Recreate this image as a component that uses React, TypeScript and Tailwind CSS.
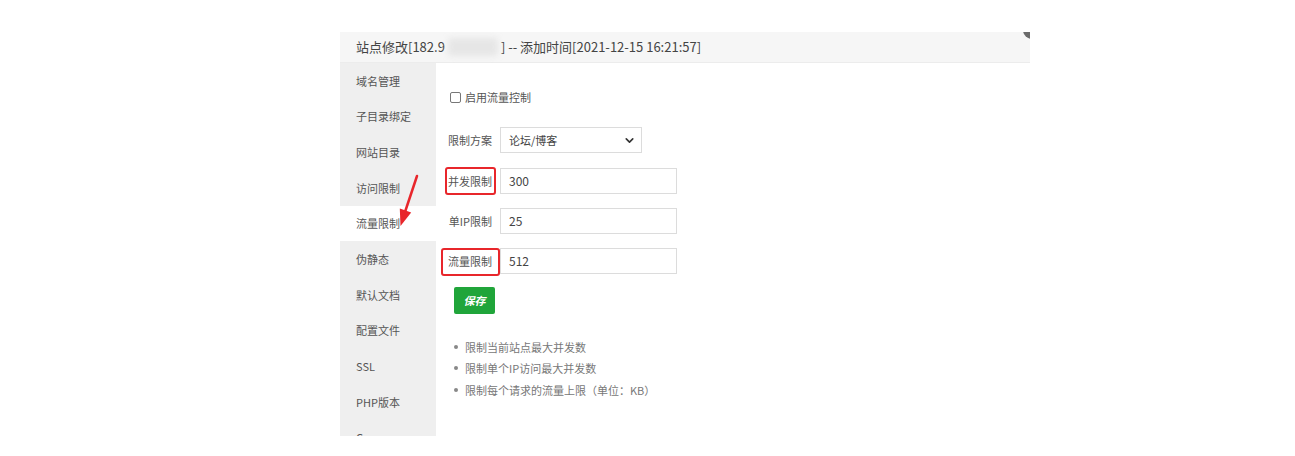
import { ChevronDown } from 'lucide-react';

const menu = ['域名管理', '子目录绑定', '网站目录', '访问限制', '流量限制', '伪静态', '默认文档', '配置文件', 'SSL', 'PHP版本', 'Composer'];

const tips = ['限制当前站点最大并发数', '限制单个IP访问最大并发数', '限制每个请求的流量上限（单位：KB）'];

function Field({ label, value, mark }: { label: string; value: string; mark?: 'tight' | 'wide' }) {
  return (
    <div className="flex items-center h-[26px]">
      <span className="relative w-[56px] text-right text-[11px] text-[#555]">
        {label}
        {mark === 'tight' && (
          <span className="absolute left-[9px] -right-[4px] -top-[6px] -bottom-[6px] border-2 border-[#e8262b] rounded-[3px]" />
        )}
        {mark === 'wide' && (
          <span className="absolute left-[5px] -right-[8px] -top-[5px] -bottom-[7px] border-2 border-[#e8262b] rounded-[3px]" />
        )}
      </span>
      <div className="ml-[8px] w-[177px] h-[26px] border border-[#dcdcdc] bg-white flex items-center px-[8px] text-[12px] text-[#444]">
        {value}
      </div>
    </div>
  );
}

export default function App() {
  return (
    <div className="w-[1295px] h-[456px] bg-white pt-[32px] pl-[340px]" style={{ fontFamily: '"Noto Sans CJK SC", "Noto Sans", sans-serif' }}>
      <div className="relative w-[690px] h-[404px] overflow-hidden flex flex-col">
        {/* Title bar */}
        <div className="h-[31px] shrink-0 bg-[#f6f6f6] border-b border-[#ececec] flex items-center pl-[16px] text-[13px] text-[#444]">
          <span>站点修改[182.9</span>
          <span className="inline-block w-[50px] h-[18px] mx-[3px] bg-[#e6e6e6] rounded blur-[3px]" />
          <span>] -- 添加时间[2021-12-15 16:21:57]</span>
        </div>
        <span className="absolute -top-[11px] -right-[11px] w-[18px] h-[18px] rounded-full bg-[#6b6b6b]" />

        <div className="flex flex-1 min-h-0">
          {/* Side menu */}
          <div className="w-[96px] shrink-0 bg-[#efefef] overflow-hidden">
            {menu.map((m) => (
              <div
                key={m}
                className={`h-[35.7px] flex items-center pl-[16px] text-[11px] text-[#555] ${m === '流量限制' ? 'bg-white' : ''}`}
              >
                {m}
              </div>
            ))}
          </div>

          {/* Content */}
          <div className="flex-1 bg-white pt-[21px]">
            <label className="flex items-center h-[26px] pl-[14px] text-[11px] text-[#555]">
              <span className="w-[11px] h-[11px] border border-[#777] rounded-[2px] bg-white" />
              <span className="ml-[4px]">启用流量控制</span>
            </label>

            <div className="mt-[17px] flex items-center h-[26px]">
              <span className="w-[56px] text-right text-[11px] text-[#555]">限制方案</span>
              <div className="ml-[8px] w-[142px] h-[26px] border border-[#dcdcdc] bg-white flex items-center justify-between pl-[8px] pr-[5px] text-[11px] text-[#444]">
                <span>论坛/博客</span>
                <ChevronDown className="w-[13px] h-[13px] text-[#333]" strokeWidth={3} />
              </div>
            </div>

            <div className="mt-[15px]">
              <Field label="并发限制" value="300" mark="tight" />
            </div>
            <div className="mt-[14px]">
              <Field label="单IP限制" value="25" />
            </div>
            <div className="mt-[14px]">
              <Field label="流量限制" value="512" mark="wide" />
            </div>

            <button className="mt-[13px] ml-[18px] w-[41px] h-[27px] bg-[#20a53a] rounded-[2px] text-white text-[11px] font-bold italic">
              保存
            </button>

            <ul className="mt-[22px] pl-[18px] text-[11px] text-[#777]">
              {tips.map((t) => (
                <li key={t} className="h-[21.5px] flex items-center">
                  <span className="w-[4px] h-[4px] rounded-full bg-[#888]" />
                  <span className="ml-[7px]">{t}</span>
                </li>
              ))}
            </ul>
          </div>
        </div>

        {/* Red pointer arrow */}
        <svg className="absolute left-[50px] top-[138px]" width="30" height="62" viewBox="0 0 30 62">
          <line x1="27" y1="6" x2="15" y2="42" stroke="#e8262b" strokeWidth="2.5" strokeLinecap="round" />
          <polygon points="21.2,42.4 9.8,38.6 10.5,56" fill="#e8262b" />
        </svg>
      </div>
    </div>
  );
}
